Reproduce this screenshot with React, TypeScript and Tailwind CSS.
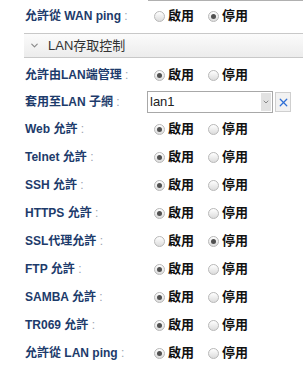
import { ChevronDown, X } from "lucide-react";

const FONT = { fontFamily: '"Liberation Sans", Arial, "Noto Sans CJK TC", sans-serif' };

type Row = { label: string; on: boolean };

const ROWS: Row[] = [
  { label: "Web 允許", on: true },
  { label: "Telnet 允許", on: true },
  { label: "SSH 允許", on: true },
  { label: "HTTPS 允許", on: true },
  { label: "SSL代理允許", on: false },
  { label: "FTP 允許", on: true },
  { label: "SAMBA 允許", on: true },
  { label: "TR069 允許 ", on: true },
  { label: "允許從 LAN ping", on: true },
];

function Radio({ checked }: { checked: boolean }) {
  return (
    <span className="flex h-[11px] w-[11px] items-center justify-center rounded-full border border-[#b8b8b8] bg-gradient-to-b from-[#ffffff] to-[#dcdcdc]">
      {checked && <span className="h-[5px] w-[5px] rounded-full bg-[#505050]" />}
    </span>
  );
}

function Toggle({ on }: { on: boolean }) {
  return (
    <div className="flex items-center text-[13px] font-bold text-[#111]">
      <Radio checked={on} />
      <span className="ml-[3px]">啟用</span>
      <span className="ml-[14px]"><Radio checked={!on} /></span>
      <span className="ml-[3px]">停用</span>
    </div>
  );
}

function Label({ text }: { text: string }) {
  return (
    <div className="w-[129px] shrink-0 text-[12px] font-bold text-[#1d3b6b]">
      {text}
      <span className="font-normal text-[#9aa3b0]"> :</span>
    </div>
  );
}

function FieldRow({ label, on, h = "h-[28px]" }: Row & { h?: string }) {
  return (
    <div className={`flex items-center pl-[25px] ${h}`}>
      <Label text={label} />
      <Toggle on={on} />
    </div>
  );
}

export default function App() {
  return (
    <div className="h-[369px] w-[303px] overflow-hidden bg-white" style={FONT}>
      <div className="ml-[148px] h-px bg-[#b0b0b0]" />
      <FieldRow label="允許從 WAN ping" on={false} h="h-[30px]" />

      <div className="ml-[24px] mt-[2px] flex h-[25px] items-center border-y border-[#c8c8c8] bg-gradient-to-b from-[#fbfbfb] to-[#ececec] pl-[5px] text-[13px] text-[#333]">
        <ChevronDown size={11} strokeWidth={2.5} className="text-[#8a8a8a]" />
        <span className="ml-[8px]">LAN存取控制</span>
      </div>

      <div className="mt-[3px]">
        <FieldRow label="允許由LAN端管理" on={true} h="h-[28px]" />
      </div>

      <div className="flex h-[26px] items-center pl-[25px]">
        <div className="w-[122px] shrink-0 text-[12px] font-bold text-[#1d3b6b]">
          套用至LAN 子網<span className="font-normal text-[#9aa3b0]"> :</span>
        </div>
        <div className="flex h-[22px] w-[126px] items-center border border-[#a8a8a8] bg-white">
          <span className="flex-1 pl-[2px] text-[13px] text-[#222]">lan1</span>
          <span className="mr-px flex h-[18px] w-[10px] items-center justify-center bg-[#e2e2e2]">
            <ChevronDown size={8} strokeWidth={3} className="text-[#888]" />
          </span>
        </div>
        <span className="ml-[2px] flex h-[20px] w-[16px] items-center justify-center border border-[#cfcfcf] bg-[#f2f2f2]">
          <X size={13} strokeWidth={2.4} className="text-[#2f6fd6]" />
        </span>
      </div>

      {ROWS.map(r => (
        <FieldRow key={r.label} label={r.label} on={r.on} />
      ))}
    </div>
  );
}
